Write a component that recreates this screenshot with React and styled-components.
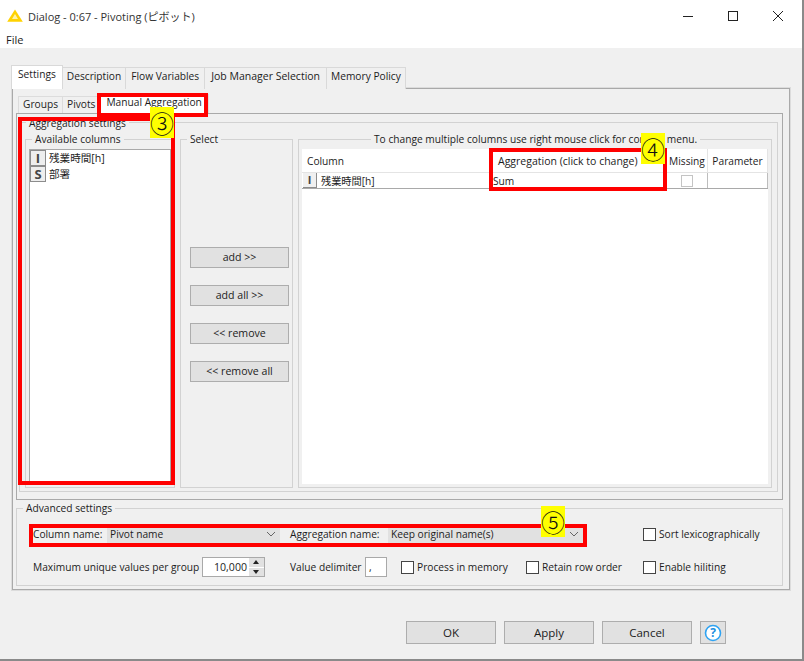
import React from 'react';
import styled, { createGlobalStyle } from 'styled-components';

const GlobalStyle = createGlobalStyle`
    html, body {
        margin: 0;
        padding: 0;
        background: #fff;
    }
    * {
        box-sizing: border-box;
    }
`;

const FONT = `"Open Sans", "Noto Sans CJK JP", sans-serif`;

const Field = ({ title, children, ...rest }) => (
    <FieldBox {...rest}>
        <Legend>{title}</Legend>
        {children}
    </FieldBox>
);

const CheckOption = ({ label, width }) => (
    <OptionCell $width={width}>
        <CheckBox />
        <span>{label}</span>
    </OptionCell>
);

const Combo = ({ value, width }) => (
    <ComboBox $width={width}>
        <span>{value}</span>
        <svg width="10" height="6" viewBox="0 0 10 6">
            <path d="M1 1l4 4 4-4" fill="none" stroke="#666" strokeWidth="1" />
        </svg>
    </ComboBox>
);

const App = () => (
    <Page>
        <GlobalStyle />
        <TitleBar>
            <svg width="16" height="13" viewBox="0 0 16 13">
                <path d="M8 0.5L15.8 12.7H0.2Z" fill="#ffd200" />
                <path d="M8 5L11 10H5Z" fill="#fff3a8" />
            </svg>
            <TitleText>Dialog - 0:67 - Pivoting (ピボット)</TitleText>
            <WindowControls>
                <svg width="12" height="12" viewBox="0 0 12 12">
                    <path d="M1 6.5H11" stroke="#222" strokeWidth="1" />
                </svg>
                <svg width="12" height="12" viewBox="0 0 12 12">
                    <rect x="1.5" y="1.5" width="9" height="9" fill="none" stroke="#222" strokeWidth="1" />
                </svg>
                <svg width="12" height="12" viewBox="0 0 12 12">
                    <path d="M1 1L11 11M11 1L1 11" stroke="#222" strokeWidth="1" />
                </svg>
            </WindowControls>
        </TitleBar>
        <MenuBar>File</MenuBar>

        <Body>
            <TabStrip>
                <Tab $active $pad={6}>Settings</Tab>
                <Tab $pad={4}>Description</Tab>
                <Tab $pad={5}>Flow Variables</Tab>
                <Tab $pad={6} $wide>Job Manager Selection</Tab>
                <Tab $pad={4}>Memory Policy</Tab>
            </TabStrip>
            <TabPanel>
                <SubTabStrip>
                    <SubTab $pad={4}>Groups</SubTab>
                    <SubTab $pad={4}>Pivots</SubTab>
                    <SubTab $active $pad={6}>Manual Aggregation</SubTab>
                </SubTabStrip>
                <SubPanel>
                    <Field title="Aggregation settings" $height={370} $outer>
                        <Columns>
                            <Field title="Available columns" $width={150}>
                                <ColumnList>
                                    <ColumnItem><TypeBadge>I</TypeBadge>残業時間[h]</ColumnItem>
                                    <ColumnItem><TypeBadge>S</TypeBadge>部署</ColumnItem>
                                </ColumnList>
                            </Field>
                            <Field title="Select" $width={113}>
                                <ButtonStack>
                                    <SelectButton>add &gt;&gt;</SelectButton>
                                    <SelectButton>add all &gt;&gt;</SelectButton>
                                    <SelectButton>&lt;&lt; remove</SelectButton>
                                    <SelectButton>&lt;&lt; remove all</SelectButton>
                                </ButtonStack>
                            </Field>
                            <Field title="To change multiple columns use right mouse click for context menu." $width={474} $centerLegend>
                                <AggTable>
                                    <HeaderRow>
                                        <HeaderCell $width={188} $pad={5}>Column</HeaderCell>
                                        <HeaderCell $width={177} $pad={8} $wide>Aggregation (click to change)</HeaderCell>
                                        <HeaderCell $width={41} $center>Missing</HeaderCell>
                                        <HeaderCell $width={60} $center>Parameter</HeaderCell>
                                    </HeaderRow>
                                    <DataRow>
                                        <DataCell $width={188}><SmallBadge>I</SmallBadge>残業時間[h]</DataCell>
                                        <DataCell $width={177} $pad={3}>Sum</DataCell>
                                        <DataCell $width={41} $center><TableCheck /></DataCell>
                                        <DataCell $width={60} />
                                    </DataRow>
                                </AggTable>
                            </Field>
                        </Columns>
                    </Field>
                </SubPanel>
                <Field title="Advanced settings" $height={78} $advanced>
                    <OptionRow $height={22}>
                        <LabelCell $width={74}>Column name:</LabelCell>
                        <Combo value="Pivot name" width={173} />
                        <LabelCell $width={98} $gap={10}>Aggregation name:</LabelCell>
                        <Combo value="Keep original name(s)" width={195} />
                        <CheckGap $width={60} />
                        <CheckOption label="Sort lexicographically" />
                    </OptionRow>
                    <OptionRow $height={22} $top={11}>
                        <LabelCell $width={169}>Maximum unique values per group</LabelCell>
                        <Spinner>
                            <SpinnerValue>10,000</SpinnerValue>
                            <SpinnerArrows>
                                <SpinnerArrow $up />
                                <SpinnerArrow />
                            </SpinnerArrows>
                        </Spinner>
                        <LabelCell $width={75} $gap={25}>Value delimiter</LabelCell>
                        <DelimiterInput>,</DelimiterInput>
                        <CheckGap $width={14} />
                        <CheckOption label="Process in memory" width={125} />
                        <CheckOption label="Retain row order" width={117} />
                        <CheckOption label="Enable hiliting" />
                    </OptionRow>
                </Field>
            </TabPanel>
            <Footer>
                <FooterButton>OK</FooterButton>
                <FooterButton>Apply</FooterButton>
                <FooterButton>Cancel</FooterButton>
                <HelpButton>
                    <svg width="18" height="18" viewBox="0 0 18 18">
                        <circle cx="9" cy="9" r="7.5" fill="#fff" stroke="#2fa3f2" strokeWidth="1.6" />
                        <text x="9" y="13.2" textAnchor="middle" fontSize="12" fontWeight="700" fontFamily="Open Sans, sans-serif" fill="#1d8fe0">?</text>
                    </svg>
                </HelpButton>
            </Footer>
        </Body>

        {/* Annotations drawn over the screenshot */}
        <RedBox $x={97} $y={93} $w={111} $h={24} />
        <RedBox $x={18} $y={117} $w={157} $h={368} />
        <RedBox $x={489} $y={148} $w={178} $h={43} />
        <RedBox $x={29} $y={524} $w={558} $h={23} />
        <Marker $x={150} $y={107}>③</Marker>
        <Marker $x={641} $y={133}>④</Marker>
        <Marker $x={541} $y={506}>⑤</Marker>
    </Page>
);

export default App;

const Page = styled.div`
    position: relative;
    width: 804px;
    height: 661px;
    display: flex;
    flex-direction: column;
    overflow: hidden;
    background: #fff;
    border-right: 2px solid #8a8a8a;
    border-bottom: 2px solid #8a8a8a;
    font-family: ${FONT};
    font-size: 10.2px;
    color: #1c1c1c;
`;

const TitleBar = styled.div`
    height: 31px;
    flex: none;
    display: flex;
    align-items: center;
    padding-left: 7px;
`;

const TitleText = styled.span`
    margin-left: 5px;
    font-size: 11px;
    color: #333;
`;

const WindowControls = styled.div`
    margin-left: auto;
    display: flex;
    gap: 33px;
    padding-right: 18px;
`;

const MenuBar = styled.div`
    height: 17px;
    flex: none;
    padding-left: 6px;
    font-size: 11px;
    line-height: 17px;
`;

const Body = styled.div`
    flex: 1;
    display: flex;
    flex-direction: column;
    background: #f0f0f0;
    padding: 17px 12px 0 11px;
`;

const TabStrip = styled.div`
    height: 24px;
    display: flex;
    align-items: flex-end;
`;

const Tab = styled.div`
    height: ${(p) => (p.$active ? 24 : 22)}px;
    padding: 0 ${(p) => p.$pad}px;
    line-height: 17px;
    font-size: ${(p) => (p.$wide ? '10.5px' : 'inherit')};
    background: ${(p) => (p.$active ? '#fff' : '#f0f0f0')};
    border: 1px solid #d9d9d9;
    border-bottom: none;
    margin-right: -1px;
    position: relative;
    z-index: ${(p) => (p.$active ? 1 : 0)};
`;

const TabPanel = styled.div`
    height: 502px;
    width: 778px;
    margin: -1px 0 0 1px;
    padding: 0 6px 0 3px;
    border: 1px solid #a9a9a9;
    outline: 1px solid #dcdcdc;
    background: #f0f0f0;
    display: flex;
    flex-direction: column;
`;

const SubTabStrip = styled.div`
    height: 24px;
    flex: none;
    padding-left: 2px;
    display: flex;
    align-items: flex-end;
`;

const SubTab = styled.div`
    height: ${(p) => (p.$active ? 19 : 17)}px;
    line-height: 14px;
    padding: 0 ${(p) => p.$pad}px;
    background: ${(p) => (p.$active ? '#fff' : '#f0f0f0')};
    border: 1px solid #dcdcdc;
    border-bottom: none;
    margin-right: -1px;
`;

const SubPanel = styled.div`
    height: 387px;
    flex: none;
    margin-bottom: 8px;
    padding: 8px 4px 0 2px;
    background: #f0f0f0;
    border: 1px solid #a9a9a9;
`;

const FieldBox = styled.div`
    position: relative;
    flex: none;
    width: ${(p) => (p.$width ? `${p.$width}px` : 'auto')};
    height: ${(p) => (p.$height ? `${p.$height}px` : '100%')};
    padding: ${(p) => {
        if (p.$advanced) return '14px 16px 0';
        if (p.$outer) return '9px 5px 3px';
        return '9px 3px 3px';
    }};
    border: 1px solid #d2d2d2;

    & > span:first-child {
        left: ${(p) => (p.$centerLegend ? '72px' : '6px')};
        top: ${(p) => (p.$outer ? '-7px' : '-8px')};
    }
`;

const Legend = styled.span`
    position: absolute;
    padding: 0 3px;
    background: #f0f0f0;
    line-height: 14px;
    white-space: nowrap;
`;

const Columns = styled.div`
    height: 100%;
    padding-top: 7px;
    display: flex;
    gap: 5px;
`;

const ColumnList = styled.div`
    height: 100%;
    background: #fff;
    border: 1px solid #a9a9a9;
`;

const ColumnItem = styled.div`
    height: 16px;
    display: flex;
    align-items: center;
    gap: 3px;
    font-size: 10.6px;
    line-height: 14px;
`;

const TypeBadge = styled.span`
    width: 16px;
    height: 16px;
    display: flex;
    align-items: center;
    justify-content: center;
    background: #eee;
    border: 1px solid #8c8c8c;
    font-weight: 700;
    font-size: 13px;
    line-height: 14px;
    color: #444;
`;

const SmallBadge = styled(TypeBadge)`
    width: 14px;
    height: 15px;
    margin-right: 4px;
    background: #f0f0f0;
    border-width: 0 1px 1px 0;
    font-size: 11px;
`;

const ButtonStack = styled.div`
    margin: 98px 0 0 6px;
    display: flex;
    flex-direction: column;
    gap: 17px;
`;

const SelectButton = styled.div`
    width: 99px;
    height: 21px;
    line-height: 19px;
    text-align: center;
    font-size: 10.6px;
    background: #e1e1e1;
    border: 1px solid #adadad;
`;

const AggTable = styled.div`
    height: 100%;
    background: #fff;
`;

const HeaderRow = styled.div`
    height: 24px;
    display: flex;
`;

const HeaderCell = styled.div`
    width: ${(p) => p.$width}px;
    padding-left: ${(p) => p.$pad || 0}px;
    text-align: ${(p) => (p.$center ? 'center' : 'left')};
    font-size: ${(p) => (p.$wide ? '10.5px' : 'inherit')};
    line-height: 24px;
    white-space: nowrap;
    border-right: 1px solid #e4e4e4;
    border-bottom: 1px solid #e4e4e4;
`;

const DataRow = styled.div`
    height: 16px;
    display: flex;
    border-bottom: 1px solid #a9a9a9;
`;

const DataCell = styled.div`
    width: ${(p) => p.$width}px;
    display: flex;
    align-items: center;
    justify-content: ${(p) => (p.$center ? 'center' : 'flex-start')};
    padding-left: ${(p) => (p.$center ? 0 : p.$pad || 1)}px;
    border-right: 1px solid #bdbdbd;
`;

const TableCheck = styled.span`
    width: 12px;
    height: 12px;
    border: 1px solid #c4c4c4;
`;

const OptionRow = styled.div`
    height: ${(p) => p.$height}px;
    margin-top: ${(p) => p.$top || 0}px;
    display: flex;
    align-items: center;
`;

const LabelCell = styled.span`
    flex: none;
    width: ${(p) => p.$width}px;
    margin-left: ${(p) => p.$gap || 0}px;
    white-space: nowrap;
`;

const ComboBox = styled.div`
    flex: none;
    width: ${(p) => p.$width}px;
    height: 18px;
    padding: 0 4px 0 3px;
    display: flex;
    align-items: center;
    justify-content: space-between;
    background: #e1e1e1;
`;

const CheckGap = styled.span`
    flex: none;
    width: ${(p) => p.$width}px;
`;

const OptionCell = styled.label`
    flex: none;
    width: ${(p) => (p.$width ? `${p.$width}px` : 'auto')};
    display: flex;
    align-items: center;
    gap: 3px;
    white-space: nowrap;
`;

const CheckBox = styled.span`
    width: 13px;
    height: 13px;
    background: #fff;
    border: 1px solid #444;
`;

const Spinner = styled.div`
    flex: none;
    width: 63px;
    height: 20px;
    display: flex;
    background: #fff;
    border: 1px solid #a9a9a9;
`;

const SpinnerValue = styled.span`
    flex: 1;
    text-align: right;
    padding-right: 2px;
    line-height: 18px;
    font-size: 10.6px;
`;

const SpinnerArrows = styled.div`
    width: 15px;
    display: flex;
    flex-direction: column;
    gap: 1px;
`;

const SpinnerArrow = styled.div`
    flex: 1;
    background: #e1e1e1;
    position: relative;

    &::after {
        content: '';
        position: absolute;
        left: 4px;
        top: 2px;
        border-left: 3px solid transparent;
        border-right: 3px solid transparent;
        ${(p) => (p.$up ? 'border-bottom: 4px solid #222;' : 'border-top: 4px solid #222;')}
    }
`;

const DelimiterInput = styled.div`
    flex: none;
    width: 22px;
    height: 20px;
    padding-left: 3px;
    line-height: 18px;
    background: #fff;
    border: 1px solid #a9a9a9;
`;

const Footer = styled.div`
    margin-top: 31px;
    padding-left: 395px;
    display: flex;
    gap: 8px;
`;

const FooterButton = styled.div`
    width: 90px;
    height: 23px;
    line-height: 21px;
    text-align: center;
    font-size: 11.5px;
    background: #e1e1e1;
    border: 1px solid #adadad;
`;

const HelpButton = styled.div`
    width: 26px;
    height: 23px;
    display: flex;
    align-items: center;
    justify-content: center;
    background: #e1e1e1;
    border: 1px solid #adadad;
`;

const RedBox = styled.div`
    position: absolute;
    left: ${(p) => p.$x}px;
    top: ${(p) => p.$y}px;
    width: ${(p) => p.$w}px;
    height: ${(p) => p.$h}px;
    border: 4px solid #ff0000;
`;

const Marker = styled.div`
    position: absolute;
    left: ${(p) => p.$x}px;
    top: ${(p) => p.$y}px;
    width: 24px;
    height: 31px;
    display: flex;
    align-items: center;
    justify-content: center;
    background: #ffff00;
    font-family: "Noto Sans CJK JP", sans-serif;
    font-weight: 300;
    font-size: 24px;
    color: #111;
`;
